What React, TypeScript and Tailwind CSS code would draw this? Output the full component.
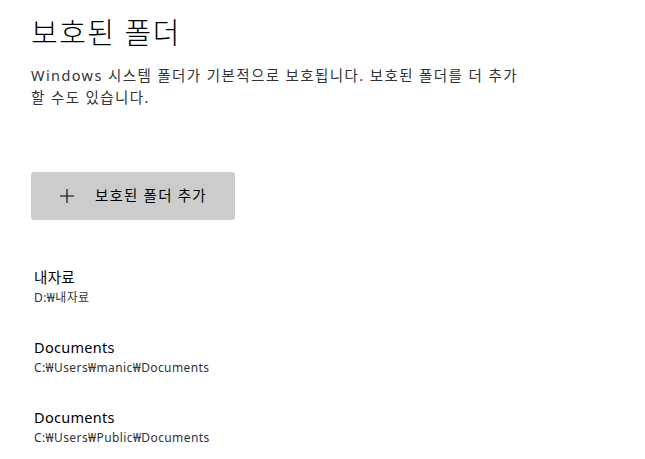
const font = { fontFamily: '"Noto Sans", "Noto Sans CJK KR", sans-serif' };

const folders = [
  { name: "내자료", path: "D:₩내자료" },
  { name: "Documents", path: "C:₩Users₩manic₩Documents" },
  { name: "Documents", path: "C:₩Users₩Public₩Documents" },
];

export default function App() {
  return (
    <div
      className="w-[645px] h-[459px] bg-white pl-[31px] pt-[13px] text-black overflow-hidden"
      style={font}
    >
      <h1 className="text-[29px] leading-[40px] font-light tracking-[1.5px]">보호된 폴더</h1>
      <p className="mt-[11px] text-[14.5px] leading-[22px] tracking-[1.4px] text-[#333] whitespace-nowrap">
        Windows 시스템 폴더가 기본적으로 보호됩니다. 보호된 폴더를 더 추가
        <br />할 수도 있습니다.
      </p>

      <button className="mt-[64px] flex h-[48px] w-[204px] items-center rounded-[3px] bg-[#cccccc] pl-[28px] text-[14.5px] tracking-[1.2px] text-black">
        <svg width="16" height="16" viewBox="0 0 16 16" className="mr-[20px]">
          <path d="M8 1v14M1 8h14" stroke="#000" strokeWidth="1.1" fill="none" />
        </svg>
        보호된 폴더 추가
      </button>

      <div className="mt-[46px] flex flex-col gap-[28px] pl-[3px]">
        {folders.map((f, i) => (
          <div key={i} className="flex flex-col">
            <span className="text-[14.5px] leading-[22px] tracking-[0.3px]">{f.name}</span>
            <span className="text-[12px] leading-[20px] tracking-[0.4px] text-[#333]">{f.path}</span>
          </div>
        ))}
      </div>
    </div>
  );
}
